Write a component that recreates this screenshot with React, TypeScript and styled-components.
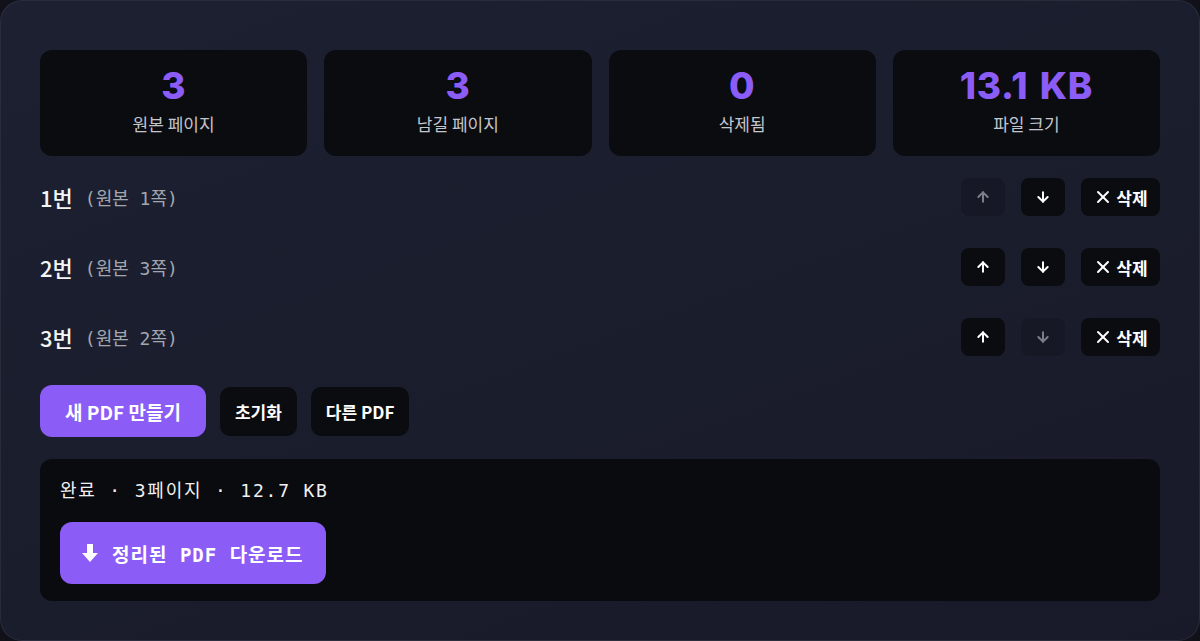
import React from "react";
import styled, { createGlobalStyle } from "styled-components";
import { ArrowUp, ArrowDown, X } from "lucide-react";

const GlobalStyle = createGlobalStyle`
  html, body {
    margin: 0;
    padding: 0;
    background: #101119;
  }
  * {
    box-sizing: border-box;
  }
`;

const sans = `"Noto Sans CJK KR", "Noto Sans", sans-serif`;
const num = `"Inter", "Noto Sans", sans-serif`;
const mono = `"DejaVu Sans Mono", "Noto Sans CJK KR", monospace`;

const Panel = styled.div`
  width: 1200px;
  min-height: 641px;
  padding: 49px 39px 39px;
  border: 1px solid rgba(255, 255, 255, 0.07);
  border-radius: 22px;
  background: linear-gradient(160deg, #1c2031 0%, #1a1d2c 55%, #191a29 100%);
  font-family: ${sans};
  color: #f3f4f6;
`;

const Stats = styled.div`
  display: grid;
  grid-template-columns: repeat(4, 1fr);
  gap: 17px;
`;

const StatCard = styled.div`
  height: 106px;
  padding-top: 15px;
  border-radius: 12px;
  background: #0b0c10;
  display: flex;
  flex-direction: column;
  align-items: center;
`;

const StatValue = styled.div`
  font-family: ${num};
  font-size: 37px;
  line-height: 42px;
  font-weight: 800;
  letter-spacing: 0.6px;
  word-spacing: 3px;
  color: #8b5cf6;
`;

const StatLabel = styled.div`
  margin-top: 4px;
  font-size: 17px;
  line-height: 26px;
  color: #c3c6cd;
`;

const List = styled.div`
  margin-top: 6px;
  display: flex;
  flex-direction: column;
`;

const Row = styled.div`
  height: 70px;
  display: flex;
  align-items: center;
`;

const RowTitle = styled.span`
  font-size: 22px;
  font-weight: 500;
  color: #f5f5f5;
`;

const RowSub = styled.span`
  margin-left: 12px;
  font-family: ${mono};
  font-size: 18px;
  color: #a3a7b0;
`;

const RowTools = styled.div`
  margin-left: auto;
  display: flex;
  gap: 16px;
`;

const IconBtn = styled.button<{ $off?: boolean }>`
  width: 44px;
  height: 38px;
  border: none;
  border-radius: 8px;
  display: flex;
  align-items: center;
  justify-content: center;
  background: ${(p) => (p.$off ? "#161925" : "#0b0c10")};
  color: ${(p) => (p.$off ? "#7b7f8a" : "#ffffff")};
  padding: 0;
`;

const DeleteBtn = styled.button`
  width: 79px;
  height: 38px;
  border: none;
  border-radius: 8px;
  background: #0b0c10;
  color: #ffffff;
  display: flex;
  align-items: center;
  justify-content: center;
  gap: 3px;
  font-family: ${sans};
  font-size: 17px;
  font-weight: 700;
  padding: 0;
`;

const Actions = styled.div`
  margin-top: 13px;
  display: flex;
  align-items: center;
  gap: 14px;
`;

const PrimaryBtn = styled.button`
  height: 52px;
  padding: 0 25px;
  border: none;
  border-radius: 12px;
  background: #8b5cf6;
  color: #ffffff;
  font-family: ${sans};
  font-size: 19px;
  font-weight: 700;
`;

const GhostBtn = styled.button`
  height: 49px;
  padding: 0 15px;
  border: none;
  border-radius: 10px;
  background: #0b0c10;
  color: #ffffff;
  font-family: ${sans};
  font-size: 17px;
  font-weight: 700;
`;

const Result = styled.div`
  margin-top: 22px;
  padding: 20px 20px 17px;
  border-radius: 12px;
  background: #0a0b0f;
`;

const ResultText = styled.div`
  font-family: ${mono};
  font-size: 18px;
  line-height: 24px;
  letter-spacing: 1.8px;
  color: #f1f1f3;
`;

const DownloadBtn = styled.button`
  margin-top: 19px;
  height: 62px;
  padding: 0 22px;
  border: none;
  border-radius: 12px;
  background: #8b5cf6;
  color: #ffffff;
  font-family: ${mono};
  font-size: 19px;
  font-weight: 700;
  letter-spacing: 1px;
  display: flex;
  align-items: center;
  gap: 14px;
`;

const stats = [
  { value: "3", label: "원본 페이지" },
  { value: "3", label: "남길 페이지" },
  { value: "0", label: "삭제됨" },
  { value: "13.1 KB", label: "파일 크기" },
];

const pages = [
  { no: 1, src: 1 },
  { no: 2, src: 3 },
  { no: 3, src: 2 },
];

const DownIcon = () => (
  <svg width="16" height="18" viewBox="0 0 16 18" fill="currentColor">
    <path d="M5 0h6v9h5l-8 9-8-9h5z" />
  </svg>
);

export default function App() {
  return (
    <>
      <GlobalStyle />
      <Panel>
        <Stats>
          {stats.map((s) => (
            <StatCard key={s.label}>
              <StatValue>{s.value}</StatValue>
              <StatLabel>{s.label}</StatLabel>
            </StatCard>
          ))}
        </Stats>

        <List>
          {pages.map((p, i) => (
            <Row key={p.no}>
              <RowTitle>{p.no}번</RowTitle>
              <RowSub>(원본 {p.src}쪽)</RowSub>
              <RowTools>
                <IconBtn $off={i === 0}>
                  <ArrowUp size={16} strokeWidth={3} />
                </IconBtn>
                <IconBtn $off={i === pages.length - 1}>
                  <ArrowDown size={16} strokeWidth={3} />
                </IconBtn>
                <DeleteBtn>
                  <X size={20} strokeWidth={2.4} />
                  삭제
                </DeleteBtn>
              </RowTools>
            </Row>
          ))}
        </List>

        <Actions>
          <PrimaryBtn>새 PDF 만들기</PrimaryBtn>
          <GhostBtn>초기화</GhostBtn>
          <GhostBtn>다른 PDF</GhostBtn>
        </Actions>

        <Result>
          <ResultText>완료 · 3페이지 · 12.7 KB</ResultText>
          <DownloadBtn>
            <DownIcon />
            <span>정리된 PDF 다운로드</span>
          </DownloadBtn>
        </Result>
      </Panel>
    </>
  );
}
